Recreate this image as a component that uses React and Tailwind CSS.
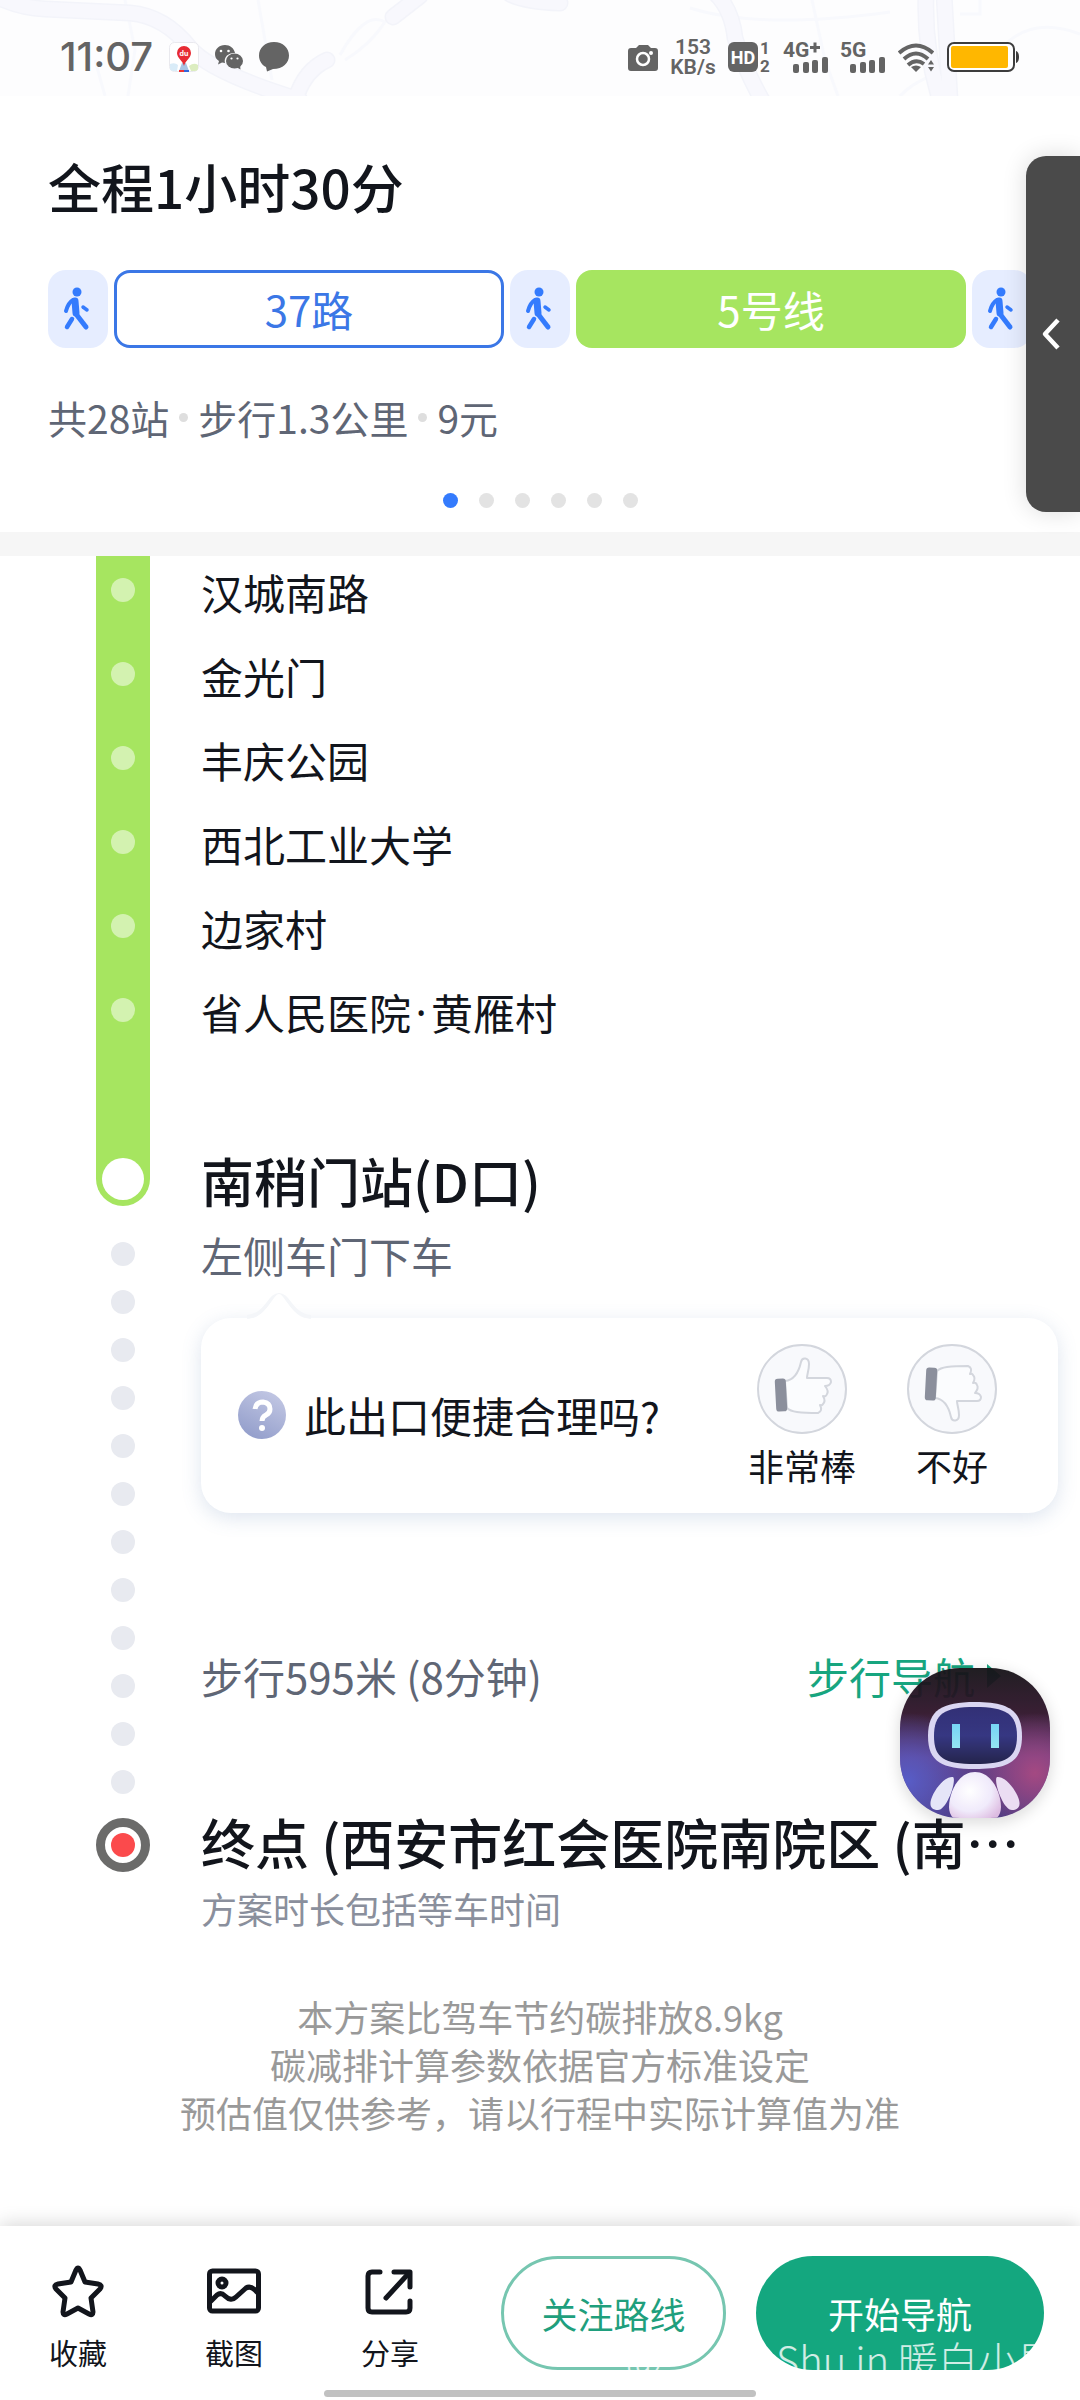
import React from "react";

const stations = ["汉城南路", "金光门", "丰庆公园", "西北工业大学", "边家村", "省人民医院·黄雁村"];

function MapRoads() {
  return (
    <>
      <path d="M-5 -4 Q20 8 45 9 L130 13 Q165 16 190 48 Q210 72 300 100" />
      <path d="M327 60 Q305 70 296 98" />
      <path d="M393 17 L420 -4" />
      <path d="M510 -6 Q525 2 560 3" />
      <path d="M716 -6 Q732 10 735 38 Q745 70 762 100" />
      <path d="M926 -6 Q924 50 940 100" />
      <path d="M944 -6 L950 100" />
    </>
  );
}

function MapBackdrop() {
  return (
    <svg className="absolute inset-0 h-full w-full" viewBox="0 0 1080 96" preserveAspectRatio="none" fill="none" aria-hidden="true">
      <g stroke="#f8f9fd" strokeWidth="3">
        <path d="M125 0 L135 50 L128 96" />
        <path d="M258 0 L272 80" />
        <path d="M95 60 L105 96" />
        <path d="M340 55 Q365 10 385 22 Q370 45 345 60" />
        <path d="M690 8 Q760 30 890 12" />
        <path d="M812 0 L825 60 L838 96" />
        <path d="M960 14 H980 V0" />
        <path d="M900 96 Q920 75 960 68" />
        <path d="M1000 50 Q1030 15 1080 34" />
      </g>
      <g stroke="#f3f4fa" strokeWidth="17" strokeLinecap="round">
        <MapRoads />
      </g>
      <g stroke="#f8f8fd" strokeWidth="14" strokeLinecap="round">
        <MapRoads />
      </g>
    </svg>
  );
}

function Signal({ label, plus }) {
  return (
    <div className="h-8 w-11 text-[#646464]">
      <svg viewBox="0 0 44 32" className="h-8 w-11 overflow-visible" fill="currentColor">
        <text x="-1" y="16" fontFamily="Roboto, sans-serif" fontSize="21" fontWeight="700">{label}</text>
        {plus && <path d="M26 6.500 H36 M31 1.500 V11.500" stroke="currentColor" strokeWidth="3" />}
        <rect x="9" y="23" width="6" height="9" rx="2" />
        <rect x="19" y="21" width="6" height="11" rx="2" />
        <rect x="28" y="19" width="6" height="13" rx="2" />
        <rect x="38" y="16" width="6" height="16" rx="2" />
      </svg>
    </div>
  );
}

function StatusBar() {
  return (
    <header className="relative flex h-24 items-center justify-between bg-[#fdfdfe] pr-[61px] pl-[60px] pt-[18px] text-[#646464]">
      <MapBackdrop />
      <div className="relative flex items-center gap-4">
        <span className="font-['Inter',sans-serif] text-[40px] leading-[40px] font-medium">11:07</span>
        <svg viewBox="0 0 30 30" className="h-[30px] w-[30px]">
          <rect x="0.5" y="0.5" width="29" height="29" rx="5" fill="#fff" stroke="#e9e9ee" />
          <path d="M1 22 Q6 20 9 23 L8 29 H4 Q1 29 1 26Z" fill="#d9ecf8" />
          <path d="M20 24 Q25 20 29 23 V26 Q29 29 26 29 H22Z" fill="#dcedc0" />
          <path d="M13 21 H17 L20 29 H10Z" fill="#a9c4e4" />
          <rect x="10" y="28" width="5" height="2" fill="#e33" />
          <rect x="15" y="28" width="5" height="2" fill="#36d" />
          <path d="M15 24 C14 19 8 16 8 11 A7 7 0 0 1 22 11 C22 16 16 19 15 24Z" fill="#e72b33" />
          <text x="15" y="14" textAnchor="middle" fontFamily="Inter, sans-serif" fontSize="7" fontWeight="700" fill="#fff">du</text>
        </svg>
        <svg viewBox="0 0 28 25" className="h-[25px] w-7" fill="currentColor">
          <path d="M10 0 C4 0 0 4 0 9 C0 12 1 14 4 16 L3 19.500 L7 17.500 L10 18 A9 8 0 0 1 20 8 C19 3 15 0 10 0Z" />
          <ellipse cx="19.500" cy="16" rx="8.500" ry="7.500" />
          <path d="M21 22 L25.500 24.500 L25 20Z" />
          <circle cx="6" cy="6" r="1.300" fill="#fff" />
          <circle cx="13.500" cy="6" r="1.300" fill="#fff" />
          <circle cx="16.500" cy="13.500" r="1.100" fill="#fff" />
          <circle cx="22.500" cy="13.500" r="1.100" fill="#fff" />
        </svg>
        <svg viewBox="0 0 30 30" className="h-[30px] w-[30px]" fill="currentColor">
          <path d="M15 0 C6 0 0 6 0 13.500 C0 19 3 23 7 25 L8 29.500 L14 27 C24 27 30 21 30 13.500 C30 6 24 0 15 0Z" />
        </svg>
      </div>
      <div className="relative flex items-center gap-[13px]">
        <svg viewBox="0 0 30 27" className="h-[27px] w-[30px]">
          <path d="M3 4 H8 L11 1 H20 L23 4 H27 Q30 4 30 7 V24 Q30 27 27 27 H3 Q0 27 0 24 V7 Q0 4 3 4Z" fill="#646464" />
          <circle cx="15" cy="15" r="6" fill="none" stroke="#fff" strokeWidth="2.500" />
          <circle cx="23" cy="9" r="2" fill="#fff" />
        </svg>
        <div className="flex w-11 flex-col items-center font-['Roboto',sans-serif] text-[21px] leading-[20px] font-semibold">
          <span>153</span>
          <span>KB/s</span>
        </div>
        <svg viewBox="0 0 43 30" className="h-[30px] w-[43px] overflow-visible" fill="#646464" fontFamily="Roboto, sans-serif" fontWeight="700">
          <rect width="30" height="30" rx="6" />
          <text x="15" y="22" textAnchor="middle" fontSize="18" fill="#fff">HD</text>
          <text x="32" y="12" fontSize="17">1</text>
          <text x="32" y="30" fontSize="17">2</text>
        </svg>
        <Signal label="4G" plus />
        <Signal label="5G" />
        <svg viewBox="0 0 36 29" className="h-[29px] w-9" fill="none" stroke="#646464" strokeWidth="4">
          <path d="M1 10 Q18 -5 35 10" />
          <path d="M6 16 Q18 5 30 16" />
          <path d="M10 22 Q18 15 26 21" />
          <path d="M13 24 Q18 21 23 24 L18 29Z" fill="#646464" stroke="none" />
          <path d="M30 21.500 L33 17 L36 21.500Z M30 24 H36 L33 28.500Z" fill="#646464" stroke="none" />
        </svg>
        <svg viewBox="0 0 72 30" className="h-[30px] w-[72px]">
          <rect x="1" y="1" width="66" height="28" rx="6" fill="#fff" stroke="#3d3d3d" strokeWidth="2" />
          <rect x="4" y="4" width="57" height="22" rx="2" fill="#ffb700" />
          <path d="M69 9 Q72 10 72 15 Q72 20 69 21Z" fill="#3d3d3d" />
        </svg>
      </div>
    </header>
  );
}

function WalkChip() {
  return (
    <div className="flex h-[78px] items-center justify-center rounded-[18px] bg-[#e6edff]">
      <svg viewBox="0 0 60 78" className="h-[78px] w-[60px]" fill="none" stroke="#347bfd" strokeLinecap="round" strokeLinejoin="round" aria-label="步行">
        <circle cx="29" cy="22" r="4.500" fill="#347bfd" stroke="none" />
        <path d="M25 30 Q20 33 18 41" strokeWidth="4" />
        <path d="M27 31 L28 43" strokeWidth="7" />
        <path d="M28 44 L38 57" strokeWidth="5" />
        <path d="M24 49 L19 57" strokeWidth="4.500" />
        <path d="M35 37 L39 40" strokeWidth="3.500" />
      </svg>
    </div>
  );
}

function InfoDot() {
  return <span className="mx-[10px] h-[9px] w-[9px] rounded-full bg-[#dedede]" />;
}

function Summary() {
  return (
    <section className="relative px-12 pt-[54px] pb-6">
      <h1 className="text-[53px] leading-[72px] font-medium text-[#12151c]">全程1小时30分</h1>
      <div className="mt-12 grid grid-cols-[60px_1fr_60px_1fr_60px] gap-[6px] text-[42px]">
        <WalkChip />
        <div className="flex items-center justify-center rounded-2xl border-3 border-[#3b77e6] leading-[60px] text-[#3b77e6]">37路</div>
        <WalkChip />
        <div className="flex items-center justify-center rounded-2xl bg-[#a6e560] leading-[60px] text-white">5号线</div>
        <WalkChip />
      </div>
      <div className="mt-[42px] flex items-center text-[39px] leading-[54px] text-[#5f6675]">
        <span>共28站</span>
        <InfoDot />
        <span>步行1.3公里</span>
        <InfoDot />
        <span>9元</span>
      </div>
      <div className="mt-[49px] flex justify-center gap-[21px]">
        {[0, 1, 2, 3, 4, 5].map((i) => (
          <span key={i} className={i === 0 ? "h-[15px] w-[15px] rounded-full bg-[#347bfd]" : "h-[15px] w-[15px] rounded-full bg-[#e3e3e3]"} />
        ))}
      </div>
      <button aria-label="展开" className="absolute top-[60px] right-0 z-10 flex h-[356px] w-[54px] items-center justify-center rounded-l-[20px] bg-[#4a4a4a] shadow-[0_0_24px_rgba(0,0,0,0.14)]">
        <svg viewBox="0 0 24 32" className="h-8 w-6" fill="none" stroke="#fff" strokeWidth="4.500" strokeLinejoin="round">
          <path d="M17 2 L4 16 L17 30" />
        </svg>
      </button>
    </section>
  );
}

function Rail() {
  return (
    <div className="flex w-[54px] shrink-0 flex-col items-center">
      <div className="flex h-[650px] w-full flex-col items-center justify-between rounded-b-full bg-[#a6e560] pt-[22px] pb-[6px]">
        <div className="flex flex-col gap-[60px]">
          {stations.map((s) => (
            <span key={s} className="h-6 w-6 rounded-full bg-[#d3f2b0]" />
          ))}
        </div>
        <span className="h-[42px] w-[42px] rounded-full bg-white" />
      </div>
      <div className="mt-9 flex flex-col gap-6">
        {Array.from({ length: 12 }, (_, i) => (
          <span key={i} className="h-6 w-6 rounded-full bg-[#e8eaf0]" />
        ))}
      </div>
      <span className="mt-6 flex h-[54px] w-[54px] items-center justify-center rounded-full border-9 border-[#6b6b6a] bg-white">
        <span className="h-6 w-6 rounded-full bg-[#fb4a4c]" />
      </span>
    </div>
  );
}

function StationName({ name }) {
  return name.split("·").map((part, i) => (
    <React.Fragment key={part}>
      {i > 0 && <span className="w-5 text-center font-['Noto_Sans',sans-serif]">·</span>}
      <span>{part}</span>
    </React.Fragment>
  ));
}

function Thumb({ down, label }) {
  return (
    <button className="flex flex-col items-center text-[36px] leading-[48px] text-[#12151c]">
      <svg viewBox="0 0 90 90" className="h-[90px] w-[90px]" fill="none" strokeLinejoin="round" aria-hidden="true">
        <circle cx="45" cy="45" r="44" fill="#f8f9fc" stroke="#d3d6dd" strokeWidth="2" />
        <g transform={down ? "translate(0 91) scale(1 -1)" : undefined}>
          <path d="M28 37 C38 36 42 27 44 18 C45 13 52 13 52 20 C52 26 50 30 50 34 L70 34 Q74 34 74 38 Q73 42 68 42 Q72 47 70 50 Q69 53 66 52 Q69 57 66 60 Q65 62 63 61 Q66 67 61 69 Q48 69 40 68 Q33 67 30 64Z" fill="#fbfcfe" stroke="#d3d6dd" strokeWidth="2" />
          <rect x="18.500" y="34.500" width="11" height="33" rx="3" fill="#8b8f9c" transform="rotate(-3 24 51)" />
        </g>
      </svg>
      <span className="mt-[7px]">{label}</span>
    </button>
  );
}

function FeedbackCard() {
  return (
    <div className="relative mt-[33px] flex items-center justify-between rounded-[30px] bg-white pt-[26px] pr-[61px] pb-6 pl-[37px] shadow-[0_5px_20px_rgba(90,125,175,0.2)]">
      <svg viewBox="0 0 64 26" className="absolute -top-[25px] left-[46px] h-[26px] w-16" aria-hidden="true">
        <path d="M0 24 C20 22 22 2 32 2 C42 2 44 22 64 24" fill="none" stroke="#f4f6f9" strokeWidth="4" />
        <path d="M2 26 C20 24 26 1 32 1 C38 1 44 24 62 26Z" fill="#fff" />
      </svg>
      <div className="flex items-center gap-[18px] pb-1">
        <svg viewBox="0 0 48 48" className="h-12 w-12" aria-hidden="true">
          <defs>
            <linearGradient id="help" x1="0.800" y1="0" x2="0.300" y2="1">
              <stop offset="0" stopColor="#c3c8e4" />
              <stop offset="1" stopColor="#939ecb" />
            </linearGradient>
          </defs>
          <circle cx="24" cy="24" r="24" fill="url(#help)" />
          <path d="M17 18 Q18 11 25 11 Q32 12 32 18 Q32 22 28 24 Q24 26 24 30" fill="none" stroke="#fff" strokeWidth="5" />
          <circle cx="24" cy="37" r="3" fill="#fff" />
        </svg>
        <span className="text-[42px] leading-[60px] text-[#12151c]">此出口便捷合理吗?</span>
      </div>
      <div className="flex gap-[51px]">
        <Thumb label="非常棒" />
        <Thumb down label="不好" />
      </div>
    </div>
  );
}

function Robot() {
  return (
    <button aria-label="智能助手" className="absolute top-[1112px] right-[30px] z-10 h-[150px] w-[150px] overflow-hidden rounded-[60px] opacity-95 shadow-[0_4px_16px_rgba(0,0,0,0.16)]">
      <svg viewBox="0 0 150 150" className="h-full w-full">
        <defs>
          <linearGradient id="night" x1="0" y1="0" x2="0" y2="1">
            <stop offset="0" stopColor="#151317" />
            <stop offset="0.300" stopColor="#2f142a" />
            <stop offset="0.600" stopColor="#5b3580" />
            <stop offset="1" stopColor="#44337e" />
          </linearGradient>
          <radialGradient id="blueGlow" cx="0.050" cy="0.750" r="0.450">
            <stop offset="0" stopColor="#5055c4" />
            <stop offset="1" stopColor="#5055c4" stopOpacity="0" />
          </radialGradient>
          <radialGradient id="pinkGlow" cx="0.900" cy="0.700" r="0.400">
            <stop offset="0" stopColor="#a0407c" />
            <stop offset="1" stopColor="#a0407c" stopOpacity="0" />
          </radialGradient>
          <radialGradient id="shell" cx="0.400" cy="0.400" r="0.700">
            <stop offset="0" stopColor="#ffffff" />
            <stop offset="0.600" stopColor="#f0eafb" />
            <stop offset="1" stopColor="#dcb9e0" />
          </radialGradient>
          <linearGradient id="visor" x1="0" y1="0" x2="0" y2="1">
            <stop offset="0" stopColor="#28266f" />
            <stop offset="0.500" stopColor="#2c2d7c" />
            <stop offset="1" stopColor="#191943" />
          </linearGradient>
          <linearGradient id="eye" x1="0" y1="0" x2="0" y2="1">
            <stop offset="0" stopColor="#6fd3f5" />
            <stop offset="1" stopColor="#8fe3f2" />
          </linearGradient>
        </defs>
        <rect width="150" height="150" fill="url(#night)" />
        <rect width="150" height="150" fill="url(#blueGlow)" />
        <rect width="150" height="150" fill="url(#pinkGlow)" />
        <path d="M75 34 C108 34 122 42 122 68 C122 94 108 101 75 101 C42 101 28 94 28 68 C28 42 42 34 75 34Z" fill="#d9d4f2" />
        <path d="M75 39 C106 39 117 46 117 68 C117 90 106 96 75 96 C44 96 34 90 34 68 C34 46 44 39 75 39Z" fill="url(#visor)" />
        <rect x="52" y="56" width="8" height="24" fill="url(#eye)" />
        <rect x="91" y="56" width="8" height="24" fill="url(#eye)" />
        <path d="M75 104 C92 104 101 125 101 139 Q101 148 94 152 H56 Q49 148 49 139 C49 125 58 104 75 104Z" fill="url(#shell)" />
        <path d="M53 109 C57 112 47 142 38 142 C30 142 29 136 32 129 C36 119 46 108 53 109Z" fill="#e4e4f8" />
        <path d="M97 109 C93 112 103 142 112 142 C120 142 121 136 118 129 C114 119 104 108 97 109Z" fill="#eadcf3" />
      </svg>
    </button>
  );
}

function Route() {
  return (
    <main className="relative">
      <div className="flex gap-[51px] pr-[22px] pl-24">
        <Rail />
        <div className="min-w-0 flex-1 pt-[6px]">
          <ul className="flex flex-col gap-6 text-[42px] leading-[60px] text-[#12151c]">
            {stations.map((s) => (
              <li key={s} className="flex"><StationName name={s} /></li>
            ))}
          </ul>
          <h2 className="mt-[102px] text-[53px] leading-[72px] font-medium text-[#12151c]">南稍门站(D口)</h2>
          <p className="mt-[9px] text-[42px] leading-[60px] text-[#5f6675]">左侧车门下车</p>
          <FeedbackCard />
          <div className="mt-[133px] flex items-center justify-between pr-[57px] text-[42px] leading-[60px]">
            <span className="text-[#5f6675]">步行595米 (8分钟)</span>
            <a href="#walk" className="flex items-center gap-3 text-[#17a57f]">
              步行导航
              <svg viewBox="0 0 14 24" className="h-6 w-[14px]" fill="currentColor" aria-hidden="true">
                <path d="M0 0 L14 12 L0 24Z" />
              </svg>
            </a>
          </div>
          <h2 className="mt-[100px] text-[54px] leading-[72px] font-medium whitespace-nowrap text-[#12151c]">终点 (西安市红会医院南院区 (南…</h2>
          <p className="mt-[6px] text-[36px] leading-[48px] text-[#8a8f9c]">方案时长包括等车时间</p>
        </div>
      </div>
      <p className="mt-[60px] text-center text-[36px] leading-[48px] text-[#999999]">
        本方案比驾车节约碳排放8.9kg
        <br />
        碳减排计算参数依据官方标准设定
        <br />
        预估值仅供参考，请以行程中实际计算值为准
      </p>
      <Robot />
    </main>
  );
}

function Action({ label, children }) {
  return (
    <button className="flex w-[156px] flex-col items-center text-[29px] leading-9 text-[#12151c]">
      <svg viewBox="0 0 54 54" className="h-[54px] w-[54px]" fill="none" stroke="#12151c" strokeWidth="5" strokeLinecap="round" strokeLinejoin="round" aria-hidden="true">
        {children}
      </svg>
      <span className="mt-4">{label}</span>
    </button>
  );
}

function BottomBar() {
  return (
    <footer className="relative mt-auto bg-white pt-[30px] pb-[3px] shadow-[0_-2px_18px_rgba(0,0,0,0.16)]">
      <div className="flex items-end gap-[33px] pr-9">
        <div className="flex">
          <Action label="收藏">
            <path d="M27 4 Q28 4 29 6 L34 18 L47 20 Q52 21 49 25 L40 34 L42 48 Q42 52 38 50 L27 44 L16 50 Q12 52 12 48 L14 34 L5 25 Q2 21 7 20 L20 18 L25 6 Q26 4 27 4Z" />
          </Action>
          <Action label="截图">
            <rect x="2.500" y="7" width="49" height="40" rx="3" />
            <circle cx="15" cy="19" r="4" />
            <path d="M4 37 L10 31 Q14 28 18 32 Q24 38 29 33 L39 24 Q44 21 50 28" />
          </Action>
          <Action label="分享">
            <path d="M17 8 H9 Q5 8 5 12 V44 Q5 48 9 48 H43 Q47 48 47 44 V37" />
            <path d="M31 8 H47 V23" />
            <path d="M46 9 L23 34" />
          </Action>
        </div>
        <div className="grid flex-1 grid-cols-[25fr_32fr] gap-[30px] text-[36px] leading-[48px]">
          <button className="h-[114px] rounded-full border-3 border-[#76c6b0] text-[#1f9f7d]">关注路线</button>
          <button className="h-[114px] rounded-full bg-[#14a77f] text-white">开始导航</button>
        </div>
      </div>
      <div className="mx-auto mt-5 h-[7px] w-2/5 rounded-full bg-[#c1c1c1]" />
      <div className="pointer-events-none absolute right-[22px] bottom-[11px] flex gap-[114px] text-[40px] leading-[60px] font-light whitespace-nowrap text-white/80">
        <span>@</span>
        <span>Shu in 暖白小屋</span>
      </div>
    </footer>
  );
}

export default function App() {
  return (
    <div lang="zh-CN" className="flex min-h-screen flex-col overflow-x-hidden bg-white font-['Noto_Sans_CJK_SC',sans-serif]">
      <StatusBar />
      <Summary />
      <div className="h-6 bg-[#f6f6f6]" />
      <Route />
      <BottomBar />
    </div>
  );
}
